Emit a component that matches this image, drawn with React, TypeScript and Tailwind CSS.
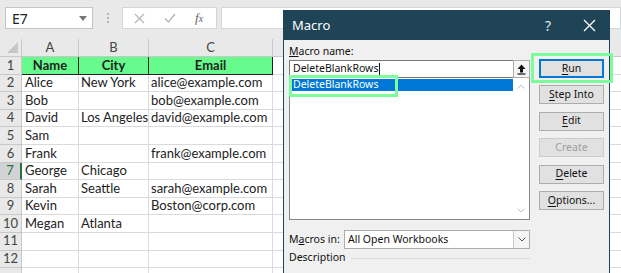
import React from 'react';

type Row = { n: number; a?: string; b?: string; c?: string };

const rows: Row[] = [
  { n: 2, a: 'Alice', b: 'New York', c: 'alice@example.com' },
  { n: 3, a: 'Bob', c: 'bob@example.com' },
  { n: 4, a: 'David', b: 'Los Angeles', c: 'david@example.com' },
  { n: 5, a: 'Sam' },
  { n: 6, a: 'Frank', c: 'frank@example.com' },
  { n: 7, a: 'George', b: 'Chicago' },
  { n: 8, a: 'Sarah', b: 'Seattle', c: 'sarah@example.com' },
  { n: 9, a: 'Kevin', c: 'Boston@corp.com' },
  { n: 10, a: 'Megan', b: 'Atlanta' },
  { n: 11 },
  { n: 12 },
];

const extraCols = ['D', 'E', 'F', 'G', 'H'];

const FormulaBar = () => (
  <div className="flex h-[39px] items-start gap-0 bg-[#e9e9e9] pt-[7px]">
    <div className="ml-[5px] flex h-[22px] w-[88px] items-center justify-between border border-[#c6c6c6] bg-white pl-[6px] pr-[5px] text-[14px] text-[#222]">
      <span>E7</span>
      <svg width="8" height="5" viewBox="0 0 8 5">
        <path d="M0 0h8L4 5z" fill="#777" />
      </svg>
    </div>
    <div className="flex h-[22px] w-[29px] flex-col items-center justify-center gap-[2px]">
      <span className="size-[2px] bg-[#b5b5b5]" />
      <span className="size-[2px] bg-[#b5b5b5]" />
      <span className="size-[2px] bg-[#b5b5b5]" />
    </div>
    <div className="flex h-[22px] w-[95px] items-center border border-[#d6d6d6] bg-white">
      <svg className="ml-[11px]" width="11" height="11" viewBox="0 0 11 11">
        <path d="M1 1l9 9M10 1l-9 9" stroke="#b8b8b8" strokeWidth="1.3" fill="none" />
      </svg>
      <svg className="ml-[19px]" width="12" height="10" viewBox="0 0 12 10">
        <path d="M1 5.5l3.5 3.5L11 1" stroke="#b8b8b8" strokeWidth="1.4" fill="none" />
      </svg>
      <span className="ml-[19px] font-['Liberation_Serif'] text-[13px] italic text-[#666]">
        f<span className="text-[10px]">x</span>
      </span>
    </div>
    <div className="ml-[4px] h-[22px] flex-1 border border-[#d6d6d6] bg-white" />
  </div>
);

const Sheet = () => (
  <div className="font-['Lato',sans-serif] text-[13px] text-[#222]">
    <div className="flex h-[18px] bg-[#e9e9e9] text-[13px] text-[#444]">
      <div className="relative w-[22px] shrink-0 border-r border-b border-[#c8c8c8]">
        <svg className="absolute right-[3px] bottom-[3px]" width="11" height="11" viewBox="0 0 11 11">
          <path d="M11 0v11H0z" fill="#c6c6c6" />
        </svg>
      </div>
      <div className="flex w-[57px] shrink-0 items-center justify-center border-r border-b border-[#c8c8c8]">A</div>
      <div className="flex w-[70px] shrink-0 items-center justify-center border-r border-b border-[#c8c8c8]">B</div>
      <div className="flex w-[124px] shrink-0 items-center justify-center border-r border-b border-[#c8c8c8]">C</div>
      {extraCols.map((c) => (
        <div
          key={c}
          className="flex w-[70px] shrink-0 items-center justify-center border-r border-b border-[#c8c8c8]"
        >
          {c}
        </div>
      ))}
    </div>

    <div className="flex h-[17.6px]">
      <div className="flex w-[22px] shrink-0 items-center justify-center border-r border-b border-[#c8c8c8] bg-[#e9e9e9] text-[#444]">
        1
      </div>
      <div className="flex w-[57px] shrink-0 items-center justify-center border-r border-b border-[#222] bg-[#66fb8c] font-bold">
        Name
      </div>
      <div className="flex w-[70px] shrink-0 items-center justify-center border-r border-b border-[#222] bg-[#66fb8c] font-bold">
        City
      </div>
      <div className="flex w-[124px] shrink-0 items-center justify-center border-r border-b border-[#222] bg-[#66fb8c] font-bold">
        Email
      </div>
      {extraCols.map((c) => (
        <div key={c} className="w-[70px] shrink-0 border-r border-b border-[#dadada]" />
      ))}
    </div>

    {rows.map((r) => {
      const sel = r.n === 7;
      return (
        <div key={r.n} className="flex h-[17.6px]">
          <div
            className={`flex w-[22px] shrink-0 items-center justify-center border-b ${
              sel
                ? 'border-r-2 border-b-[#c8c8c8] border-r-[#217346] bg-[#d3d3d3] text-[#217346]'
                : 'border-r border-[#c8c8c8] bg-[#e9e9e9] text-[#444]'
            }`}
          >
            {r.n}
          </div>
          <div className="flex w-[57px] shrink-0 items-center whitespace-nowrap border-r border-b border-[#dadada] pl-[3px]">
            {r.a}
          </div>
          <div className="flex w-[70px] shrink-0 items-center whitespace-nowrap border-r border-b border-[#dadada] pl-[2px]">
            {r.b}
          </div>
          <div className="flex w-[124px] shrink-0 items-center whitespace-nowrap border-r border-b border-[#dadada] pl-[2px]">
            {r.c}
          </div>
          {extraCols.map((c) => (
            <div key={c} className="w-[70px] shrink-0 border-r border-b border-[#dadada]" />
          ))}
        </div>
      );
    })}

    <div className="flex h-[17.6px]">
      <div className="w-[22px] shrink-0 border-r border-[#c8c8c8] bg-[#e9e9e9]" />
      <div className="w-[57px] shrink-0 border-r border-[#dadada]" />
      <div className="w-[70px] shrink-0 border-r border-[#dadada]" />
      <div className="w-[124px] shrink-0 border-r border-[#dadada]" />
    </div>
  </div>
);

const DlgButton = ({
  label,
  hot,
  rest,
  primary,
  disabled,
}: {
  label?: string;
  hot?: string;
  rest?: string;
  primary?: boolean;
  disabled?: boolean;
}) => (
  <div
    className={`flex h-[19px] w-[65px] items-center justify-center border bg-[#e1e1e1] ${
      primary ? 'border-[#0078d7] shadow-[inset_0_0_0_1px_#0078d7]' : disabled ? 'border-[#cccccc]' : 'border-[#adadad]'
    } ${disabled ? 'text-[#a0a0a0]' : 'text-[#111]'}`}
  >
    {label ?? (
      <span>
        <span className="underline underline-offset-2">{hot}</span>
        {rest}
      </span>
    )}
  </div>
);

const MacroDialog = () => (
  <div className="absolute top-[10px] left-[283px] h-[280px] w-[327px] border border-[#1f4457] bg-[#f0f0f0] font-['Noto_Sans',sans-serif] text-[10.5px] text-[#111]">
    <div className="flex h-[29px] items-center bg-[#1f4457] pl-[8px] text-white">
      <span className="text-[13px]">Macro</span>
      <span className="ml-auto mr-[32px] text-[14px] text-[#e0e8ec]">?</span>
      <svg className="mr-[13px]" width="13" height="13" viewBox="0 0 13 13">
        <path d="M1 1l11 11M12 1L1 12" stroke="#fff" strokeWidth="1.3" fill="none" />
      </svg>
    </div>

    <div className="flex gap-[9px] pl-[5px]">
      <div className="flex w-[241px] flex-col">
        <div className="mt-[4px] h-[15px] leading-[15px]">
          <span className="underline underline-offset-1">M</span>acro name:
        </div>
        <div className="mt-[1px] flex h-[18px]">
          <div className="flex flex-1 items-center border border-[#7a7a7a] border-r-0 bg-white pl-[3px]">
            DeleteBlankRows
            <span className="ml-[1px] h-[13px] w-px bg-[#111]" />
          </div>
          <div className="flex w-[17px] items-center justify-center border border-[#adadad] bg-[#f5f5f5]">
            <svg width="9" height="11" viewBox="0 0 9 11">
              <path d="M4.5 0.5L0.5 5h2.5v3.5h3V5h2.5z" fill="#111" />
              <path d="M0.5 10h8" stroke="#111" strokeWidth="1.2" />
            </svg>
          </div>
        </div>
        <div className="relative flex h-[142px] border border-[#828790] border-t-0 bg-white">
          <div className="flex-1 pt-[1px] pl-[1px]">
            <div className="flex h-[12px] items-center bg-[#0078d7] pl-[2px] text-white">DeleteBlankRows</div>
          </div>
          <div className="flex w-[16px] flex-col items-center justify-between py-[6px]">
            <svg width="8" height="5" viewBox="0 0 8 5">
              <path d="M0.5 4.5L4 1l3.5 3.5" stroke="#c2c2c2" fill="none" />
            </svg>
            <svg width="8" height="5" viewBox="0 0 8 5">
              <path d="M0.5 0.5L4 4l3.5-3.5" stroke="#c2c2c2" fill="none" />
            </svg>
          </div>
        </div>

        <div className="mt-[10px] flex h-[19px] items-center">
          <span className="w-[55px]">
            M<span className="underline underline-offset-1">a</span>cros in:
          </span>
          <div className="flex h-full flex-1 border border-[#adadad] bg-white">
            <span className="flex flex-1 items-center pl-[3px]">All Open Workbooks</span>
            <div className="flex w-[16px] items-center justify-center border-l border-[#c8c8c8] bg-[#f5f5f5]">
              <svg width="8" height="5" viewBox="0 0 8 5">
                <path d="M0.5 0.5L4 4l3.5-3.5" stroke="#555" fill="none" />
              </svg>
            </div>
          </div>
        </div>
        <div className="mt-[1px] flex h-[16px] items-center">
          <span>Description</span>
          <span className="ml-[5px] h-px flex-1 bg-[#dcdcdc]" />
        </div>
      </div>

      <div className="mt-[19px] flex flex-col gap-[7.4px]">
        <DlgButton hot="R" rest="un" primary />
        <DlgButton hot="S" rest="tep Into" />
        <DlgButton hot="E" rest="dit" />
        <DlgButton label="Create" disabled />
        <DlgButton hot="D" rest="elete" />
        <DlgButton hot="O" rest="ptions..." />
      </div>
    </div>
  </div>
);

export default function App() {
  return (
    <div className="relative h-[273px] w-[621px] overflow-hidden bg-white">
      <FormulaBar />
      <Sheet />
      <MacroDialog />
      <div className="pointer-events-none absolute top-[75px] left-[289px] h-[22px] w-[109px] border-[3px] border-[#7dfb9d]" />
      <div className="pointer-events-none absolute top-[53px] left-[531px] h-[30px] w-[82px] border-[3px] border-[#7dfb9d]" />
    </div>
  );
}
